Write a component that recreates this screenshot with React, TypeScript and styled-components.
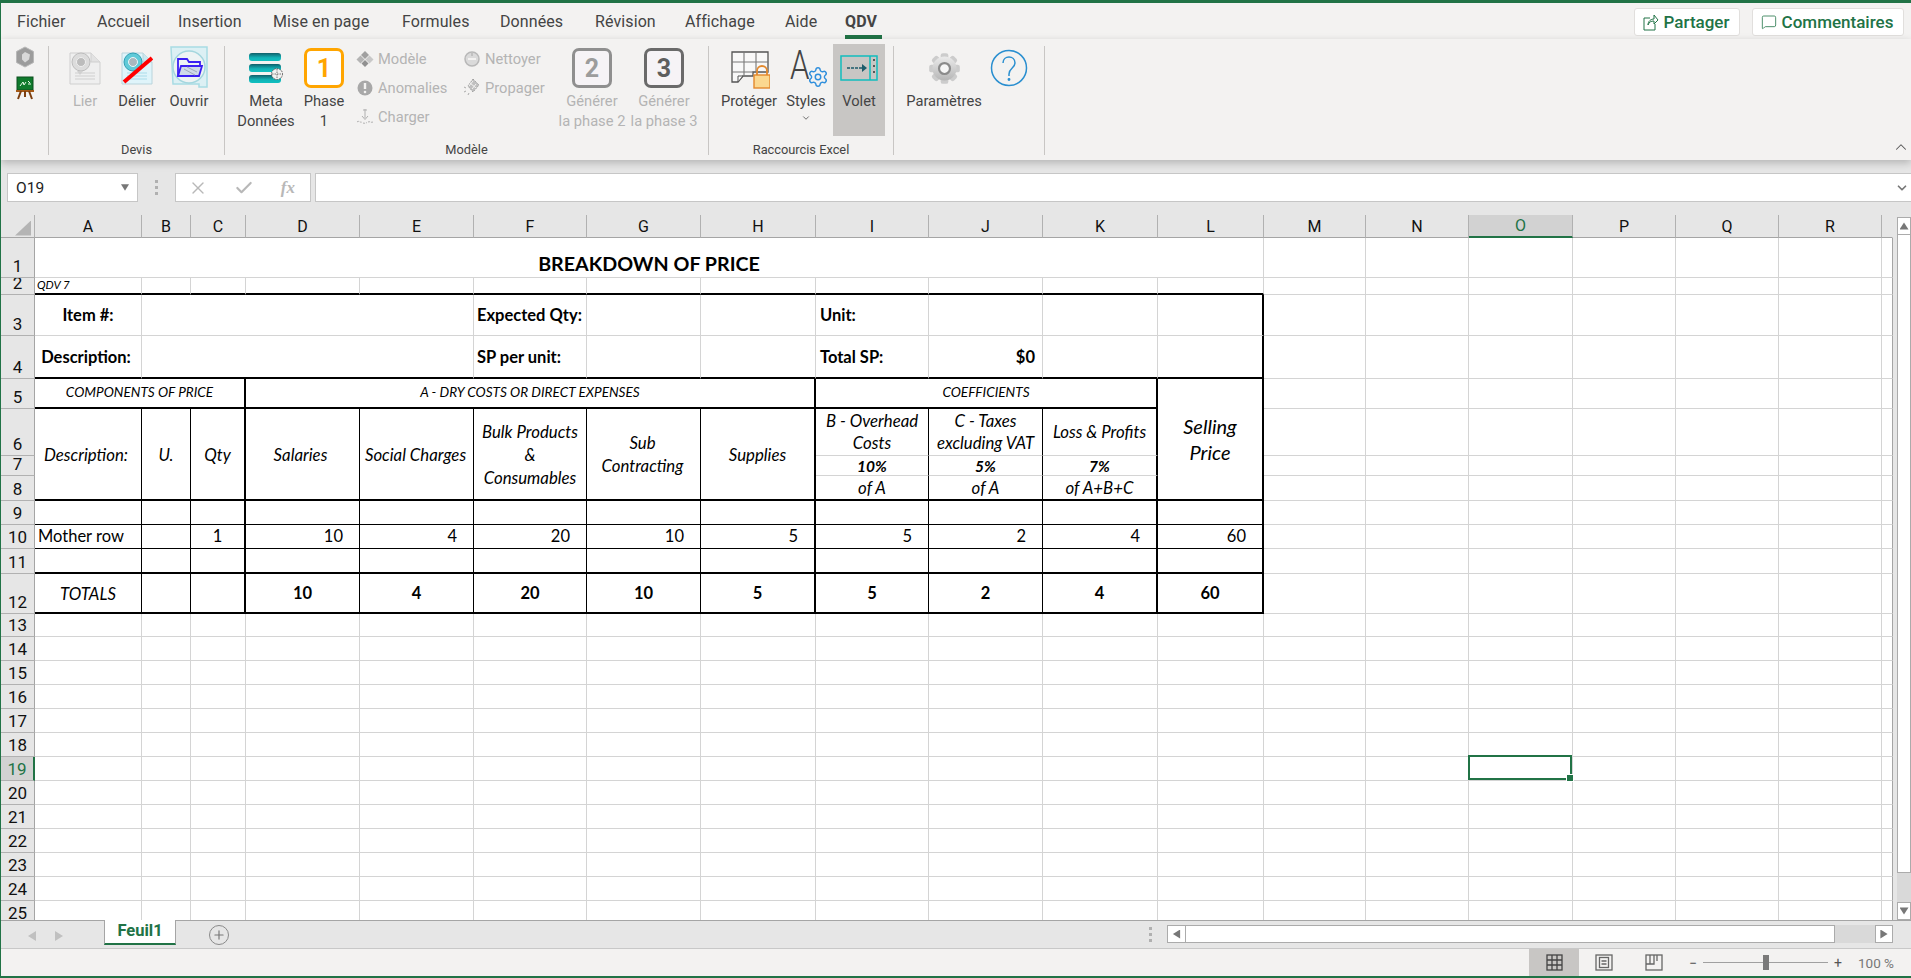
import * as React from "react";
import styled, { createGlobalStyle } from "styled-components";
import { Check, ChevronDown, ChevronUp, MessageSquare, Plus, Settings, X } from "lucide-react";

const GREEN = "#217346";
const GRID = "#d4d4d4";
const UI_FONT = `Roboto, "Noto Sans", sans-serif`;
const CELL_FONT = `Lato, "Open Sans", sans-serif`;

const GlobalStyle = createGlobalStyle`
  html, body { margin: 0; padding: 0; height: 100%; overflow: hidden; background: #f3f2f1; }
  #root { height: 100%; }
  * { box-sizing: border-box; }
`;

const Window = styled.div`
  display: flex;
  flex-direction: column;
  height: 100vh;
  border-top: 3px solid ${GREEN};
  border-left: 1px solid ${GREEN};
  border-bottom: 2px solid ${GREEN};
  font-family: ${UI_FONT};
  color: #444;
`;

/* ---------- menu tabs ---------- */
const MenuBar = styled.div`
  display: flex;
  flex: none;
  height: 36px;
  padding-left: 16px;
  background: #f3f2f1;
  position: relative;
`;

const MenuTab = styled.div<{ $active?: boolean; $w: number }>`
  width: ${(p) => p.$w}px;
  height: 36px;
  padding-top: 9px;
  line-height: 20px;
  font-size: 16px;
  white-space: nowrap;
  letter-spacing: 0.1px;
  font-weight: ${(p) => (p.$active ? 700 : 400)};
  color: #444;
  position: relative;
  &::after {
    content: "";
    display: ${(p) => (p.$active ? "block" : "none")};
    position: absolute;
    left: 0;
    width: 37px;
    bottom: 0;
    height: 4px;
    background: ${GREEN};
  }
`;

const MenuActions = styled.div`
  margin-left: auto;
  display: flex;
  gap: 12px;
  padding: 5px 7px 0 0;
`;

const ActionButton = styled.div<{ $w: number }>`
  width: ${(p) => p.$w}px;
  height: 28px;
  display: flex;
  align-items: center;
  justify-content: center;
  gap: 5px;
  padding-right: 2px;
  background: #fff;
  border: 1px solid #e1dfdd;
  border-radius: 3px;
  color: ${GREEN};
  font-size: 17px;
  font-weight: 500;
`;

/* ---------- ribbon ---------- */
const Ribbon = styled.div`
  display: flex;
  flex: none;
  height: 121px;
  padding-top: 7px;
  background: #f3f2f1;
  position: relative;
  z-index: 2;
  box-shadow: 0 3px 8px rgba(0, 0, 0, 0.22);
`;

const RibbonGroup = styled.div<{ $w: number }>`
  width: ${(p) => p.$w}px;
  height: 109px;
  border-right: 1px solid #c8c6c4;
  display: flex;
  flex-direction: column;
`;

const GroupItems = styled.div<{ $pad?: number }>`
  display: flex;
  height: 90px;
  padding-left: ${(p) => p.$pad ?? 0}px;
`;

const GroupLabel = styled.div`
  margin-top: 5px;
  height: 18px;
  line-height: 18px;
  text-align: center;
  font-size: 12.8px;
  color: #444;
  white-space: nowrap;
`;

const QuickColumn = styled.div`
  display: flex;
  flex-direction: column;
  align-items: center;
  gap: 8px;
`;

const LargeButton = styled.div<{ $w: number; $disabled?: boolean; $pressed?: boolean }>`
  width: ${(p) => p.$w}px;
  height: ${(p) => (p.$pressed ? 92 : 90)}px;
  margin-top: ${(p) => (p.$pressed ? -2 : 0)}px;
  padding-top: ${(p) => (p.$pressed ? 2 : 0)}px;
  background: ${(p) => (p.$pressed ? "#c8c6c4" : "transparent")};
  display: flex;
  flex-direction: column;
  align-items: center;
  font-size: 14.7px;
  line-height: 20px;
  text-align: center;
  white-space: nowrap;
  color: ${(p) => (p.$disabled ? "#b4b4b4" : "#444")};
`;

const IconSlot = styled.div`
  height: 44px;
  margin-bottom: 1px;
  display: flex;
  align-items: center;
  justify-content: center;
  position: relative;
`;

const StyleGear = styled(Settings)`
  position: absolute;
  right: -3px;
  bottom: 2px;
`;

const CaretIcon = styled(ChevronDown)`
  margin-top: 2px;
`;

const SmallColumn = styled.div<{ $w: number; $pad?: number }>`
  width: ${(p) => p.$w}px;
  margin-top: -2px;
  padding-left: ${(p) => p.$pad ?? 0}px;
  display: flex;
  flex-direction: column;
`;

const SmallButton = styled.div`
  height: 29px;
  display: flex;
  align-items: center;
  gap: 4px;
  font-size: 14.7px;
  color: #b4b4b4;
  white-space: nowrap;
`;

const PhaseBadge = styled.div<{ $tone: "active" | "mid" | "dark" }>`
  width: 40px;
  height: 40px;
  border-radius: 7px;
  border: 3px solid ${(p) => ({ active: "#ffa500", mid: "#8f8f8f", dark: "#6a6a6a" })[p.$tone]};
  background: ${(p) => (p.$tone === "active" ? "#fff" : "#f6f3f6")};
  color: ${(p) => ({ active: "#ffa500", mid: "#9c9c9c", dark: "#5e5e5e" })[p.$tone]};
  display: flex;
  align-items: center;
  justify-content: center;
  font: 700 25px ${UI_FONT};
`;

const Collapse = styled.div`
  margin-left: auto;
  align-self: flex-end;
  margin-right: 1px;
  height: 22px;
  color: #555;
`;

/* ---------- formula bar ---------- */
const FormulaBar = styled.div`
  display: flex;
  flex: none;
  align-items: flex-start;
  height: 55px;
  padding: 13px 0 0 6px;
  background: #e6e6e6;
`;

const NameBox = styled.div`
  width: 131px;
  height: 29px;
  padding: 0 8px;
  display: flex;
  align-items: center;
  justify-content: space-between;
  background: #fff;
  border: 1px solid #c6c6c6;
  font-size: 15.5px;
  color: #222;
`;

const Grip = styled.div`
  width: 37px;
  height: 29px;
  display: flex;
  flex-direction: column;
  align-items: center;
  justify-content: center;
  gap: 3px;
  span {
    width: 3px;
    height: 3px;
    background: #b0b0b0;
  }
`;

const FormulaTools = styled.div`
  width: 136px;
  height: 29px;
  display: flex;
  align-items: center;
  justify-content: space-between;
  padding: 0 15px 0 12px;
  background: #fff;
  border: 1px solid #c6c6c6;
  color: #b8b8b8;
`;

const FxMark = styled.span`
  font: italic 700 17px "Liberation Serif", serif;
  color: #b8b8b8;
`;

const FormulaInput = styled.div`
  flex: 1;
  margin-left: 4px;
  height: 29px;
  padding-right: 2px;
  display: flex;
  align-items: center;
  justify-content: flex-end;
  background: #fff;
  border-top: 1px solid #c6c6c6;
  border-bottom: 1px solid #c6c6c6;
  border-left: 1px solid #c6c6c6;
  color: #777;
`;

/* ---------- sheet ---------- */
const SheetArea = styled.div`
  flex: none;
  height: 705px;
  display: flex;
  background: #e6e6e6;
`;

const GridClip = styled.div`
  width: 1892px;
  height: 705px;
  overflow: hidden;
  flex: none;
`;

const Sheet = styled.table`
  table-layout: fixed;
  width: 1892px;
  border-collapse: separate;
  border-spacing: 0;
  background: #fff;
  color: #000;
`;

const SheetRowBox = styled.tr<{ $h: number }>`
  height: ${(p) => p.$h}px;
`;

const SheetCol = styled.col<{ $w: number }>`
  width: ${(p) => p.$w}px;
`;

const ColHeader = styled.th<{ $selected?: boolean; $last?: boolean }>`
  height: 23px;
  padding: 0;
  background: ${(p) => (p.$selected ? "#d2d2d2" : "#e6e6e6")};
  border-right: 1px solid ${(p) => (p.$last ? "#e6e6e6" : "#b1b1b1")};
  border-bottom: ${(p) => (p.$selected ? `2px solid ${GREEN}` : "1px solid #a5a5a5")};
  font: 400 16px ${UI_FONT};
  color: ${(p) => (p.$selected ? GREEN : "#111")};
`;

const Corner = styled.div`
  width: 16px;
  height: 15px;
  margin: 4px 0 0 14px;
  background: #b4b4b4;
  clip-path: polygon(100% 0, 100% 100%, 0 100%);
`;

const RowHeader = styled.th<{ $selected?: boolean }>`
  padding: 0;
  background: ${(p) => (p.$selected ? "#d2d2d2" : "#e6e6e6")};
  border-right: ${(p) => (p.$selected ? `2px solid ${GREEN}` : "1px solid #a5a5a5")};
  border-bottom: 1px solid #b1b1b1;
  font: 400 17px ${UI_FONT};
  color: ${(p) => (p.$selected ? GREEN : "#111")};
  vertical-align: bottom;
`;

const RowLabel = styled.div<{ $h: number }>`
  height: ${(p) => p.$h - 1}px;
  padding-bottom: 1px;
  display: flex;
  align-items: flex-end;
  justify-content: center;
  overflow: hidden;
  line-height: 20px;
`;

type Edge = "grid" | "thin" | "thick" | "edge";
type Tone = "plain" | "title" | "label" | "head" | "wrap" | "sub" | "caps" | "note" | "total" | "big" | "pct";

const edges: Record<Edge, string> = {
  grid: `1px solid ${GRID}`,
  thin: "1px solid #000",
  thick: "2px solid #000",
  edge: "1px solid #a5a5a5",
};

const tones: Record<Tone, string> = {
  plain: "font-size: 16.5px;",
  title: "font-size: 19.7px; font-weight: 700; vertical-align: bottom; padding-bottom: 3px;",
  label: "font-size: 16.5px; font-weight: 700; padding-top: 2px;",
  head: "font-size: 16.8px; font-style: italic; line-height: 23px;",
  wrap: "font-size: 16.8px; font-style: italic; line-height: 22px;",
  sub: "font-size: 16.8px; font-style: italic; line-height: 17px;",
  caps: "font-size: 13.6px; font-style: italic;",
  note: "font-size: 11.5px; font-style: italic; line-height: 10px; padding-bottom: 3px;",
  total: "font-size: 16.5px; font-weight: 700;",
  big: "font-size: 20px; font-style: italic; line-height: 26px;",
  pct: "font-size: 15.5px; font-style: italic; font-weight: 700; line-height: 16px;",
};

const Cell = styled.td<{ $right: Edge; $bottom: Edge; $align: string; $tone: Tone; $pad: number }>`
  padding-left: ${(p) => (p.$align === "left" ? p.$pad : 0)}px;
  padding-right: ${(p) => (p.$align === "left" ? 0 : p.$pad)}px;
  border-right: ${(p) => edges[p.$right]};
  border-bottom: ${(p) => edges[p.$bottom]};
  text-align: ${(p) => p.$align};
  vertical-align: middle;
  overflow: hidden;
  white-space: nowrap;
  font-family: ${CELL_FONT};
  line-height: 1;
  ${(p) => tones[p.$tone]}
`;

const ActiveCell = styled.div`
  position: absolute;
  top: -2px;
  left: -1px;
  right: 0;
  bottom: 0;
  border: 2px solid ${GREEN};
  &::after {
    content: "";
    position: absolute;
    right: -4px;
    bottom: -4px;
    width: 6px;
    height: 6px;
    background: ${GREEN};
    border: 1px solid #fff;
  }
`;

const ActiveHost = styled(Cell)`
  position: relative;
  overflow: visible;
`;

const VScroll = styled.div`
  flex: 1;
  padding: 2px 0 0 4px;
  display: flex;
  flex-direction: column;
`;

const ScrollButton = styled.div<{ $h?: number; $w?: number }>`
  width: ${(p) => (p.$w ? `${p.$w}px` : "100%")};
  height: ${(p) => p.$h ?? 18}px;
  flex: none;
  display: flex;
  align-items: center;
  justify-content: center;
  background: #fff;
  border: 1px solid #ababab;
`;

const VThumb = styled.div`
  height: 638px;
  flex: none;
  background: #fff;
  border: 1px solid #ababab;
  border-top: none;
`;

const VTrack = styled.div`
  flex: 1;
  background: #d9d9d9;
`;

const Arrow = styled.div<{ $dir: "up" | "down" | "left" | "right"; $color?: string; $size?: number }>`
  width: ${(p) => p.$size ?? 9}px;
  height: ${(p) => p.$size ?? 9}px;
  background: ${(p) => p.$color ?? "#777"};
  clip-path: ${(p) =>
    ({
      up: "polygon(50% 10%, 100% 90%, 0 90%)",
      down: "polygon(0 10%, 100% 10%, 50% 90%)",
      left: "polygon(90% 0, 90% 100%, 10% 50%)",
      right: "polygon(10% 0, 90% 50%, 10% 100%)",
    })[p.$dir]};
`;

/* ---------- sheet tabs ---------- */
const TabStrip = styled.div`
  flex: none;
  height: 29px;
  display: flex;
  align-items: flex-start;
  background: #e6e6e6;
  border-top: 1px solid #a5a5a5;
  border-bottom: 1px solid #c8c8c8;
`;

const TabNav = styled.div`
  width: 103px;
  height: 27px;
  padding: 3px 40px 0 26px;
  display: flex;
  align-items: center;
  justify-content: space-between;
`;

const SheetTab = styled.div`
  width: 72px;
  height: 25px;
  margin-top: -1px;
  text-align: center;
  line-height: 21px;
  font-size: 16.5px;
  font-weight: 700;
  color: ${GREEN};
  background: #fff;
  border-left: 1px solid #a5a5a5;
  border-right: 1px solid #a5a5a5;
  border-bottom: 2px solid ${GREEN};
`;

const AddSheet = styled.div`
  width: 20px;
  height: 20px;
  margin: 4px 0 0 33px;
  display: flex;
  align-items: center;
  justify-content: center;
  border: 1.5px solid #8a8a8a;
  border-radius: 50%;
  color: #777;
`;

const HScrollArea = styled.div`
  margin-left: auto;
  width: 770px;
  height: 27px;
  padding: 4px 18px 0 0;
  display: flex;
  align-items: flex-start;
`;

const HGrip = styled(Grip)`
  width: 18px;
  margin-right: 8px;
  height: 18px;
`;

const HThumb = styled.div`
  width: 649px;
  height: 18px;
  background: #fff;
  border: 1px solid #ababab;
  border-left: none;
`;

const HTrack = styled.div`
  flex: 1;
  height: 18px;
  background: #d9d9d9;
`;

/* ---------- status bar ---------- */
const StatusBar = styled.div`
  flex: none;
  height: 27px;
  display: flex;
  justify-content: flex-end;
  align-items: stretch;
  background: #f3f2f1;
  padding-right: 17px;
  font-size: 14px;
  color: #666;
`;

const ViewButton = styled.div<{ $active?: boolean }>`
  width: 50px;
  display: flex;
  align-items: center;
  justify-content: center;
  background: ${(p) => (p.$active ? "#c8c6c4" : "transparent")};
`;

const ZoomArea = styled.div`
  display: flex;
  align-items: center;
  margin-left: 10px;
  color: #555;
`;

const ZoomSlider = styled.div`
  width: 125px;
  height: 1px;
  margin: 0 6px;
  background: #a0a0a0;
  position: relative;
`;

const ZoomThumb = styled.div`
  position: absolute;
  left: 60px;
  top: -7px;
  width: 6px;
  height: 15px;
  background: #7a7a7a;
`;

const ZoomValue = styled.div`
  margin-left: 16px;
  font-size: 13.5px;
  color: #777;
  white-space: nowrap;
`;

/* ---------- drawn icons ---------- */
const LinkIcon = () => (
  <svg width="32" height="34" viewBox="0 0 32 34">
    <path d="M1 2h21l9 9v22H1z" fill="#efefef" stroke="#cfcfcf" />
    <path d="M22 2v9h9" fill="#e2e2e2" stroke="#cfcfcf" />
    <path d="M6 22h20M6 25h20M6 28h20" stroke="#cfcfcf" />
    <circle cx="12" cy="11" r="9" fill="#dcdcdc" stroke="#bdbdbd" />
    <circle cx="12" cy="11" r="4.500" fill="#bcbcbc" stroke="#efefef" />
    <path d="M8 20l3 4 3-4z" fill="#d0d0d0" />
  </svg>
);

const UnlinkIcon = () => (
  <svg width="32" height="34" viewBox="0 0 32 34">
    <path d="M1 2h21l9 9v22H1z" fill="#dff4fa" stroke="#b9d4dc" />
    <path d="M22 2v9h9" fill="#c9e8f0" stroke="#b9d4dc" />
    <path d="M6 22h20M6 25h20M6 28h20" stroke="#a9dcea" />
    <circle cx="12" cy="11" r="9" fill="#5fcad8" stroke="#2f9fb5" />
    <circle cx="12" cy="11" r="4.500" fill="#a8b8bf" stroke="#e8f8fb" />
    <path d="M3 31L31 7" stroke="#f00" strokeWidth="4" />
  </svg>
);

const OpenIcon = () => (
  <svg width="40" height="44" viewBox="0 0 40 44">
    <path d="M2 1h36v40h-8v-3H4z" fill="#dcf0f4" stroke="#a8dbe3" strokeWidth="1.5" />
    <circle cx="20" cy="21" r="16" fill="#eef3f4" stroke="#a4d6de" strokeWidth="1.5" />
    <path d="M9 30V13h9l2 3h11v4" fill="none" stroke="#3a1ff2" strokeWidth="1.8" />
    <path d="M9 30l3-10h21l-3 10z" fill="#cfd9ea" stroke="#3a1ff2" strokeWidth="1.8" />
    <path d="M15 23l11 6M18 21l10 5" stroke="#9fa9b8" strokeWidth="1" />
  </svg>
);

const CubeIcon = () => (
  <svg width="20" height="22" viewBox="0 0 20 22">
    <path d="M10 1l8.500 4.500v11L10 21l-8.500-4.500v-11z" fill="#9c9c9c" stroke="#b8b8b8" />
    <path d="M10 6l5 2.500-1 5-4 3-3-3V8.500z" fill="#d8d8d8" />
  </svg>
);

const EaselIcon = () => (
  <svg width="20" height="24" viewBox="0 0 20 24">
    <rect x="2" y="1" width="16" height="13" fill="#0f7a2c" stroke="#0c4e1e" />
    <path d="M5 10l3-4 1 3 2-3M13 5l2 2M13 8h3" stroke="#eafbe9" strokeWidth="1" fill="none" />
    <path d="M1 15h18" stroke="#a45a17" strokeWidth="2" />
    <path d="M6 15l-3 8M14 15l3 8M10 15v6" stroke="#7d3f10" strokeWidth="2" />
  </svg>
);

const MetaIcon = () => (
  <svg width="36" height="32" viewBox="0 0 36 32">
    <defs>
      <linearGradient id="metaBar" x1="0" y1="0" x2="0" y2="1">
        <stop offset="0" stopColor="#0f5f6a" />
        <stop offset="0.6" stopColor="#10b3b7" />
        <stop offset="1" stopColor="#10c0c0" />
      </linearGradient>
    </defs>
    <rect x="1" y="1" width="32" height="8" rx="3" fill="url(#metaBar)" />
    <rect x="1" y="12" width="32" height="8" rx="3" fill="url(#metaBar)" />
    <rect x="1" y="23" width="32" height="8" rx="3" fill="url(#metaBar)" />
    <circle cx="29" cy="22" r="5.500" fill="#f3f2f1" stroke="#555" strokeDasharray="1.500 1" />
    <path d="M24 22h10M29 17v10" stroke="#555" strokeWidth="0.8" strokeDasharray="1.500 1" />
  </svg>
);

const TemplateIcon = () => (
  <svg width="18" height="18" viewBox="0 0 18 18">
    <path d="M9 1l4 4-4 4-4-4z" fill="#a0a0a0" />
    <path d="M4.500 5.500l4 4-4 4-4-4z" fill="#b4b4b4" />
    <path d="M13.500 5.500l4 4-4 4-4-4z" fill="#c8c8c8" />
    <path d="M9 10l3.500 3.500L9 17l-3.500-3.500z" fill="#909090" />
  </svg>
);

const AlertIcon = () => (
  <svg width="18" height="18" viewBox="0 0 18 18">
    <circle cx="9" cy="9" r="7.500" fill="#a8a8a8" />
    <path d="M9 4v6" stroke="#f3f2f1" strokeWidth="2.400" />
    <circle cx="9" cy="13" r="1.300" fill="#f3f2f1" />
  </svg>
);

const LoadIcon = () => (
  <svg width="18" height="18" viewBox="0 0 18 18" fill="none" stroke="#b0b0b0">
    <path d="M9 1v9M7 2h4M6 8l3 3.500L12 8" />
    <path d="M1 14c2-2 3 1 5 0M7 15c2 1 3-1 4 0M12 14c2-1 3 1 5 0" strokeDasharray="2 1" />
  </svg>
);

const CleanIcon = () => (
  <svg width="18" height="18" viewBox="0 0 18 18">
    <circle cx="9" cy="9" r="7" fill="#dadada" stroke="#b8b8b8" strokeWidth="1.500" />
    <path d="M5 9h8" stroke="#f3f2f1" strokeWidth="2" />
    <path d="M9 3v3" stroke="#a8a8a8" />
  </svg>
);

const PropagateIcon = () => (
  <svg width="18" height="20" viewBox="0 0 18 20">
    <path d="M10 1l6 6-6 7-5-6z" fill="#c0c0c0" stroke="#a0a0a0" strokeDasharray="1.500 1" />
    <path d="M7 5l6 5M10 3l-4 5M13 6l-4 5" stroke="#f3f2f1" />
    <path d="M1 9l2 1M1 14l2-1M5 17l1-2" stroke="#aaa" />
  </svg>
);

const ProtectIcon = () => (
  <svg width="42" height="42" viewBox="0 0 42 42">
    <path d="M4 5h36v20H25v4H15l-5 6H4z" fill="#f8f8f8" stroke="#555" strokeWidth="1.300" />
    <path d="M4 15h36M4 25h21M16 5v24M28 5v20" stroke="#777" strokeWidth="1.100" />
    <path d="M10 35l5-6h-5z" fill="#fff" stroke="#555" />
    <path d="M29 28v-4a5 5 0 0 1 10 0v4" fill="none" stroke="#e3892d" strokeWidth="1.800" />
    <rect x="26" y="28" width="16" height="13" fill="#fbd890" stroke="#e3892d" strokeWidth="1.400" />
  </svg>
);

const StylesGlyph = () => (
  <svg width="40" height="44" viewBox="0 0 40 44">
    <text x="5" y="33" transform="scale(0.78 1)" fontFamily={UI_FONT} fontWeight="300" fontSize="40" fill="#444">
      A
    </text>
  </svg>
);

const PaneIcon = () => (
  <svg width="38" height="28" viewBox="0 0 38 28">
    <rect x="1" y="2" width="36" height="24" fill="none" stroke="#11bdbd" strokeWidth="1.500" />
    <path d="M30 2v24" stroke="#11bdbd" strokeWidth="1.500" />
    <path d="M7 14h18" stroke="#1d5b6b" strokeWidth="1.600" strokeDasharray="3 1" />
    <path d="M22 10l5 4-5 4z" fill="#1d5b6b" />
    <path d="M33 6h2M33 12h2M33 18h2" stroke="#333" strokeWidth="1.400" />
  </svg>
);

const GearIcon = () => (
  <svg width="35" height="33" viewBox="0 0 32 30">
    <defs>
      <linearGradient id="gearFill" gradientUnits="userSpaceOnUse" x1="0" y1="1" x2="0" y2="29">
        <stop offset="0" stopColor="#f2f2f2" />
        <stop offset="1" stopColor="#aeaeae" />
      </linearGradient>
    </defs>
    {[0, 45, 90, 135, 180, 225, 270, 315].map((angle) => (
      <rect
        key={angle}
        x="12.500"
        y="1"
        width="7"
        height="8"
        rx="2"
        fill="#cccccc"
        transform={`rotate(${angle} 16 15)`}
      />
    ))}
    <circle cx="16" cy="15" r="11" fill="url(#gearFill)" />
    <circle cx="16" cy="15" r="5" fill="#f6f6f6" stroke="#8a8a8a" strokeWidth="2" />
  </svg>
);

const HelpIcon = () => (
  <svg width="40" height="40" viewBox="0 0 40 40" fill="none" stroke="#2a8fd0" strokeWidth="1.500">
    <circle cx="20" cy="20" r="17.500" />
    <path d="M14 15c0-4 3-6 6-6s6 2 6 6c0 5-6 5-6 11v2" />
    <circle cx="20" cy="31.500" r="0.700" fill="#2a8fd0" />
  </svg>
);

const ShareIcon = () => (
  <svg width="16" height="18" viewBox="0 0 16 18" fill="none" stroke={GREEN} strokeWidth="1">
    <path d="M7 5H1v12h11v-6" />
    <path d="M5 12c0-4 3-6 6-6V2l4 5-4 4V8c-3 0-5 1-6 4z" />
  </svg>
);

const GridViewIcon = () => (
  <svg width="17" height="17" viewBox="0 0 17 17" fill="none" stroke="#444" strokeWidth="1.300">
    <rect x="1" y="1" width="15" height="15" />
    <path d="M1 6h15M1 11h15M6 1v15M11 1v15" />
  </svg>
);

const PageViewIcon = () => (
  <svg width="18" height="17" viewBox="0 0 18 17" fill="none" stroke="#666" strokeWidth="1.300">
    <rect x="1" y="1" width="16" height="15" />
    <rect x="4.500" y="3.500" width="9" height="10" />
    <path d="M6.500 7h5M6.500 10h5" strokeWidth="1.400" />
  </svg>
);

const BreakViewIcon = () => (
  <svg width="18" height="17" viewBox="0 0 18 17" fill="none" stroke="#666" strokeWidth="1.300">
    <rect x="1" y="1" width="16" height="15" />
    <path d="M1 10h8V1M5 10V1" />
    <path d="M12 1v6" />
  </svg>
);

/* ---------- sheet data ---------- */
const colWidths = [34, 107, 49, 55, 114, 114, 113, 114, 115, 113, 114, 115, 106, 102, 103, 104, 103, 103, 103, 11];
const colNames = ["A", "B", "C", "D", "E", "F", "G", "H", "I", "J", "K", "L", "M", "N", "O", "P", "Q", "R", ""];
const rowHeights = [40, 17, 41, 43, 30, 46, 20, 25, 24, 24, 25, 40, 23, ...Array(12).fill(24)];

type Spec = {
  text?: React.ReactNode;
  cs?: number;
  rs?: number;
  right?: Edge;
  bottom?: Edge;
  align?: "left" | "center" | "right";
  tone?: Tone;
  pad?: number;
};

const blanks = (n: number, opts: Spec = {}): Spec[] => Array.from({ length: n }, () => ({ ...opts }));
const tableRights: Edge[] = ["thin", "thin", "thick", "thin", "thin", "thin", "thin", "thick", "thin", "thin", "thick", "thick"];
const lines = (...parts: string[]) =>
  parts.map((part, i) => (
    <React.Fragment key={i}>
      {i > 0 && <br />}
      {part}
    </React.Fragment>
  ));

const bodyRow = (bottom: Edge, overrides: Record<number, Spec> = {}): Spec[] =>
  tableRights.map((right, i) => ({ right, bottom, ...overrides[i] }));

const numberCell = (text: string): Spec => ({ text, align: "right", pad: 16, tone: "plain" });
const totalCell = (text: string): Spec => ({ text, tone: "total" });
const headCell = (text: React.ReactNode, right: Edge, pad = 0): Spec => ({
  text,
  rs: 3,
  right,
  bottom: "thick",
  tone: "head",
  pad,
});

const sheetRows: Spec[][] = [
  [{ text: "BREAKDOWN OF PRICE", cs: 12, tone: "title" }],
  [{ text: "QDV 7", tone: "note", align: "left", pad: 2, bottom: "thick" }, ...blanks(11, { bottom: "thick" })],
  [
    { text: "Item #:", tone: "label" },
    { cs: 4 },
    { text: "Expected Qty:", tone: "label", align: "left", pad: 3 },
    ...blanks(2),
    { text: "Unit:", tone: "label", align: "left", pad: 4 },
    ...blanks(2),
    { right: "thick" },
  ],
  [
    { text: "Description:", tone: "label", bottom: "thick", pad: 4 },
    { cs: 4, bottom: "thick" },
    { text: "SP per unit:", tone: "label", align: "left", pad: 3, bottom: "thick" },
    ...blanks(2, { bottom: "thick" }),
    { text: "Total SP:", tone: "label", align: "left", pad: 4, bottom: "thick" },
    { text: "$0", tone: "label", align: "right", pad: 7, bottom: "thick" },
    { bottom: "thick" },
    { right: "thick", bottom: "thick" },
  ],
  [
    { text: "COMPONENTS OF PRICE", cs: 3, tone: "caps", right: "thick", bottom: "thick" },
    { text: "A - DRY COSTS OR DIRECT EXPENSES", cs: 5, tone: "caps", right: "thick", bottom: "thick" },
    { text: "COEFFICIENTS", cs: 3, tone: "caps", right: "thick", bottom: "thick" },
    { text: lines("Selling", "Price"), rs: 4, tone: "big", right: "thick", bottom: "thick" },
  ],
  [
    headCell("Description:", "thin", 4),
    headCell("U.", "thin"),
    headCell("Qty", "thick"),
    headCell("Salaries", "thin", 4),
    headCell("Social Charges", "thin", 2),
    headCell(lines("Bulk Products", "&", "Consumables"), "thin"),
    headCell(lines("Sub", "Contracting"), "thin", 2),
    headCell("Supplies", "thick"),
    { text: lines("B - Overhead", "Costs"), tone: "wrap", right: "thin" },
    { text: lines("C - Taxes", "excluding VAT"), tone: "wrap", right: "thin" },
    { text: "Loss & Profits", tone: "wrap", right: "thick" },
  ],
  [
    { text: "10%", tone: "pct", right: "thin" },
    { text: "5%", tone: "pct", right: "thin" },
    { text: "7%", tone: "pct", right: "thick" },
  ],
  [
    { text: "of A", tone: "sub", right: "thin", bottom: "thick" },
    { text: "of A", tone: "sub", right: "thin", bottom: "thick" },
    { text: "of A+B+C", tone: "sub", right: "thick", bottom: "thick" },
  ],
  bodyRow("thin"),
  bodyRow("thin", {
    0: { text: "Mother row", align: "left", pad: 3, tone: "plain" },
    2: { text: "1", tone: "plain" },
    3: numberCell("10"),
    4: numberCell("4"),
    5: numberCell("20"),
    6: numberCell("10"),
    7: numberCell("5"),
    8: numberCell("5"),
    9: numberCell("2"),
    10: numberCell("4"),
    11: numberCell("60"),
  }),
  bodyRow("thick"),
  bodyRow("thick", {
    0: { text: "TOTALS", tone: "head" },
    3: totalCell("10"),
    4: totalCell("4"),
    5: totalCell("20"),
    6: totalCell("10"),
    7: totalCell("5"),
    8: totalCell("5"),
    9: totalCell("2"),
    10: totalCell("4"),
    11: totalCell("60"),
  }),
];

const ACTIVE_ROW = 18;
const ACTIVE_COL = 14;

function renderCell(spec: Spec, key: React.Key) {
  return (
    <Cell
      key={key}
      colSpan={spec.cs}
      rowSpan={spec.rs}
      $right={spec.right ?? "grid"}
      $bottom={spec.bottom ?? "grid"}
      $align={spec.align ?? "center"}
      $tone={spec.tone ?? "plain"}
      $pad={spec.pad ?? 0}
    >
      {spec.text}
    </Cell>
  );
}

function SheetRow({ index }: { index: number }) {
  const specs = sheetRows[index] ?? blanks(12);
  const fill = Array.from({ length: 7 }, (_, i) => i + 12);
  return (
    <SheetRowBox $h={rowHeights[index]}>
      <RowHeader $selected={index === ACTIVE_ROW}>
        <RowLabel $h={rowHeights[index]}>{index + 1}</RowLabel>
      </RowHeader>
      {specs.map((spec, i) => renderCell(spec, i))}
      {fill.map((col) =>
        index === ACTIVE_ROW && col === ACTIVE_COL ? (
          <ActiveHost key={col} $right="grid" $bottom="grid" $align="center" $tone="plain" $pad={0}>
            <ActiveCell />
          </ActiveHost>
        ) : (
          renderCell({ right: col === 18 ? "edge" : "grid" }, col)
        )
      )}
    </SheetRowBox>
  );
}

const menuTabs: [string, number][] = [
  ["Fichier", 80],
  ["Accueil", 81],
  ["Insertion", 95],
  ["Mise en page", 129],
  ["Formules", 98],
  ["Données", 95],
  ["Révision", 90],
  ["Affichage", 100],
  ["Aide", 60],
];

export default function App() {
  return (
    <Window>
      <GlobalStyle />
      <MenuBar>
        {menuTabs.map(([name, w]) => (
          <MenuTab key={name} $w={w}>
            {name}
          </MenuTab>
        ))}
        <MenuTab $active $w={40}>
          QDV
        </MenuTab>
        <MenuActions>
          <ActionButton $w={106}>
            <ShareIcon />
            Partager
          </ActionButton>
          <ActionButton $w={152}>
            <MessageSquare size={16} strokeWidth={1.2} />
            Commentaires
          </ActionButton>
        </MenuActions>
      </MenuBar>

      <Ribbon>
        <RibbonGroup $w={48}>
          <QuickColumn>
            <CubeIcon />
            <EaselIcon />
          </QuickColumn>
        </RibbonGroup>

        <RibbonGroup $w={176}>
          <GroupItems $pad={10}>
            <LargeButton $w={52} $disabled>
              <IconSlot>
                <LinkIcon />
              </IconSlot>
              Lier
            </LargeButton>
            <LargeButton $w={52}>
              <IconSlot>
                <UnlinkIcon />
              </IconSlot>
              Délier
            </LargeButton>
            <LargeButton $w={52}>
              <IconSlot>
                <OpenIcon />
              </IconSlot>
              Ouvrir
            </LargeButton>
          </GroupItems>
          <GroupLabel>Devis</GroupLabel>
        </RibbonGroup>

        <RibbonGroup $w={484}>
          <GroupItems $pad={6}>
            <LargeButton $w={70}>
              <IconSlot>
                <MetaIcon />
              </IconSlot>
              Meta
              <br />
              Données
            </LargeButton>
            <LargeButton $w={46}>
              <IconSlot>
                <PhaseBadge $tone="active">1</PhaseBadge>
              </IconSlot>
              Phase
              <br />1
            </LargeButton>
            <SmallColumn $w={116} $pad={9}>
              <SmallButton>
                <TemplateIcon />
                Modèle
              </SmallButton>
              <SmallButton>
                <AlertIcon />
                Anomalies
              </SmallButton>
              <SmallButton>
                <LoadIcon />
                Charger
              </SmallButton>
            </SmallColumn>
            <SmallColumn $w={93}>
              <SmallButton>
                <CleanIcon />
                Nettoyer
              </SmallButton>
              <SmallButton>
                <PropagateIcon />
                Propager
              </SmallButton>
            </SmallColumn>
            <LargeButton $w={72} $disabled>
              <IconSlot>
                <PhaseBadge $tone="mid">2</PhaseBadge>
              </IconSlot>
              Générer
              <br />
              la phase 2
            </LargeButton>
            <LargeButton $w={72} $disabled>
              <IconSlot>
                <PhaseBadge $tone="dark">3</PhaseBadge>
              </IconSlot>
              Générer
              <br />
              la phase 3
            </LargeButton>
          </GroupItems>
          <GroupLabel>Modèle</GroupLabel>
        </RibbonGroup>

        <RibbonGroup $w={185}>
          <GroupItems $pad={10}>
            <LargeButton $w={60}>
              <IconSlot>
                <ProtectIcon />
              </IconSlot>
              Protéger
            </LargeButton>
            <LargeButton $w={54}>
              <IconSlot>
                <StylesGlyph />
                <StyleGear size={22} strokeWidth={1.6} color="#2f8fdc" />
              </IconSlot>
              Styles
              <CaretIcon size={10} strokeWidth={2} color="#555" />
            </LargeButton>
            <LargeButton $w={52} $pressed>
              <IconSlot>
                <PaneIcon />
              </IconSlot>
              Volet
            </LargeButton>
          </GroupItems>
          <GroupLabel>Raccourcis Excel</GroupLabel>
        </RibbonGroup>

        <RibbonGroup $w={151}>
          <GroupItems $pad={8}>
            <LargeButton $w={84}>
              <IconSlot>
                <GearIcon />
              </IconSlot>
              Paramètres
            </LargeButton>
            <LargeButton $w={46}>
              <IconSlot>
                <HelpIcon />
              </IconSlot>
            </LargeButton>
          </GroupItems>
        </RibbonGroup>

        <Collapse>
          <ChevronUp size={18} strokeWidth={1.4} />
        </Collapse>
      </Ribbon>

      <FormulaBar>
        <NameBox>
          O19
          <Arrow $dir="down" $size={8} />
        </NameBox>
        <Grip>
          <span />
          <span />
          <span />
        </Grip>
        <FormulaTools>
          <X size={20} strokeWidth={1.6} />
          <Check size={20} strokeWidth={2.6} />
          <FxMark>fx</FxMark>
        </FormulaTools>
        <FormulaInput>
          <ChevronDown size={14} strokeWidth={3} />
        </FormulaInput>
      </FormulaBar>

      <SheetArea>
        <GridClip>
          <Sheet>
            <colgroup>
              {colWidths.map((w, i) => (
                <SheetCol key={i} $w={w} />
              ))}
            </colgroup>
            <thead>
              <tr>
                <ColHeader>
                  <Corner />
                </ColHeader>
                {colNames.map((name, i) => (
                  <ColHeader key={i} $selected={i === ACTIVE_COL} $last={i === colNames.length - 1}>
                    {name}
                  </ColHeader>
                ))}
              </tr>
            </thead>
            <tbody>
              {rowHeights.map((_, i) => (
                <SheetRow key={i} index={i} />
              ))}
            </tbody>
          </Sheet>
        </GridClip>
        <VScroll>
          <ScrollButton>
            <Arrow $dir="up" />
          </ScrollButton>
          <VThumb />
          <VTrack />
          <ScrollButton>
            <Arrow $dir="down" />
          </ScrollButton>
        </VScroll>
      </SheetArea>

      <TabStrip>
        <TabNav>
          <Arrow $dir="left" $color="#c0c0c0" $size={10} />
          <Arrow $dir="right" $color="#c0c0c0" $size={10} />
        </TabNav>
        <SheetTab>Feuil1</SheetTab>
        <AddSheet>
          <Plus size={14} strokeWidth={2} />
        </AddSheet>
        <HScrollArea>
          <HGrip>
            <span />
            <span />
            <span />
          </HGrip>
          <ScrollButton $w={19}>
            <Arrow $dir="left" />
          </ScrollButton>
          <HThumb />
          <HTrack />
          <ScrollButton $w={18}>
            <Arrow $dir="right" />
          </ScrollButton>
        </HScrollArea>
      </TabStrip>

      <StatusBar>
        <ViewButton $active>
          <GridViewIcon />
        </ViewButton>
        <ViewButton>
          <PageViewIcon />
        </ViewButton>
        <ViewButton>
          <BreakViewIcon />
        </ViewButton>
        <ZoomArea>
          −
          <ZoomSlider>
            <ZoomThumb />
          </ZoomSlider>
          +
          <ZoomValue>100 %</ZoomValue>
        </ZoomArea>
      </StatusBar>
    </Window>
  );
}
